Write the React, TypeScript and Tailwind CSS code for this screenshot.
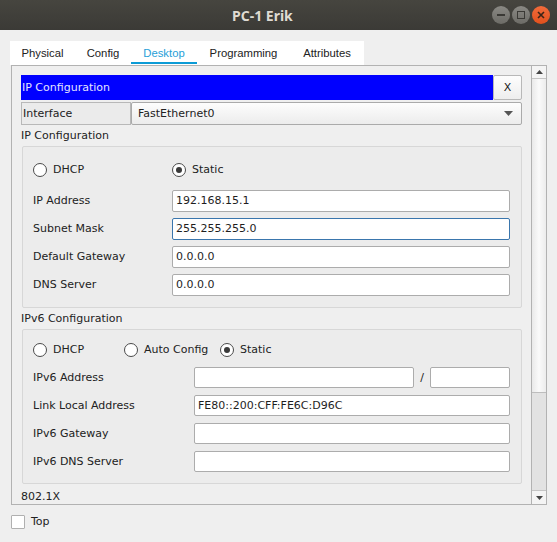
import React from "react";

function Radio({ checked }: { checked?: boolean }) {
  return (
    <span className="w-[14px] h-[14px] rounded-full border border-[#4a4a4a] bg-white flex items-center justify-center shrink-0">
      {checked && <span className="w-[6px] h-[6px] rounded-full bg-[#3a3a3a]" />}
    </span>
  );
}

function Input({
  value,
  focused,
  small,
  className = "",
}: {
  value?: string;
  focused?: boolean;
  small?: boolean;
  className?: string;
}) {
  return (
    <div
      className={`${small ? "h-[21px]" : "h-[22px]"} bg-white rounded-[2px] border flex items-center pl-[3px] pt-[1px] text-[#1e1e1e] ${
        focused ? "border-[#3a76ad]" : "border-[#acacac]"
      } ${className}`}
    >
      {value}
    </div>
  );
}

function Row({ label, labelW, children }: { label: string; labelW: string; children: React.ReactNode }) {
  return (
    <div className="flex items-center">
      <div className={`${labelW} shrink-0 pt-[1px]`}>{label}</div>
      {children}
    </div>
  );
}

export default function App() {
  return (
    <div className="w-[557px] h-[542px] bg-[#efefef] flex flex-col overflow-hidden font-['DejaVu_Sans',sans-serif] text-[11px] text-[#222]">
      {/* Title bar */}
      <div className="h-[30px] shrink-0 bg-gradient-to-b from-[#46453f] to-[#3b3a36] flex items-center">
        <div className="ml-[232px] font-['Noto_Sans',sans-serif] font-bold text-[14px] text-[#dfdbd2]">PC-1 Erik</div>
        <div className="flex-1" />
        <div className="flex items-center pr-[7px] gap-[2px]">
          <span className="w-[18px] h-[18px] rounded-full bg-gradient-to-b from-[#8a8984] to-[#6c6b66] flex items-center justify-center">
            <span className="w-[8px] h-[2px] bg-[#3a3935]" />
          </span>
          <span className="w-[18px] h-[18px] rounded-full bg-gradient-to-b from-[#8a8984] to-[#6c6b66] flex items-center justify-center">
            <span className="w-[8px] h-[8px] border-[1.5px] border-[#3a3935]" />
          </span>
          <span className="w-[18px] h-[18px] rounded-full bg-gradient-to-b from-[#f16b3a] to-[#e1501c] flex items-center justify-center">
            <svg width="8" height="8" viewBox="0 0 8 8">
              <path d="M1 1 L7 7 M7 1 L1 7" stroke="#3a2418" strokeWidth="1.6" />
            </svg>
          </span>
        </div>
      </div>

      {/* Tabs */}
      <div className="mt-[11px] ml-[10px] flex h-[24px] w-[354px] bg-white font-['Liberation_Sans',sans-serif] text-[11.3px] text-[#222]">
        <div className="w-[65px] flex items-center justify-center pt-[1px]">Physical</div>
        <div className="w-[56px] flex items-center justify-center pt-[1px]">Config</div>
        <div className="w-[66px] flex flex-col">
          <div className="flex-1 flex items-center justify-center text-[#27a0d8] pt-[4px]">Desktop</div>
          <div className="h-[3px] mb-[1px] bg-[#0b9bd6]" />
        </div>
        <div className="w-[93px] flex items-center justify-center pt-[1px]">Programming</div>
        <div className="w-[74px] flex items-center justify-center pt-[1px]">Attributes</div>
      </div>

      {/* Panel */}
      <div className="ml-[11px] w-[536px] h-[440px] border border-[#b2b2b2] flex shrink-0">
        <div className="flex-1 overflow-hidden pl-[9px] pr-[9px] pt-[9px] flex flex-col">
          {/* blue header */}
          <div className="flex h-[25px] shrink-0">
            <div className="flex-1 bg-[#0000ff] text-[#e4e4ff] flex items-center pl-[1px] pt-[2px]">IP Configuration</div>
            <div className="w-[29px] bg-gradient-to-b from-[#fdfdfd] to-[#eeeeee] border border-[#b8b8b8] rounded-[2px] flex items-center justify-center pt-[1px] text-[#222]">
              X
            </div>
          </div>
          {/* Interface */}
          <div className="flex h-[23px] mt-[2px] shrink-0">
            <div className="w-[110px] bg-[#ebebeb] border border-[#b8b8b8] flex items-center pl-[1px] pt-[2px]">Interface</div>
            <div className="flex-1 bg-gradient-to-b from-[#fdfdfd] to-[#ececec] border border-[#aaaaaa] rounded-[2px] flex items-center pl-[6px] pr-[8px]">
              <span className="flex-1 pt-[2px]">FastEthernet0</span>
              <svg width="9" height="5" viewBox="0 0 9 5">
                <path d="M0 0 L9 0 L4.5 5 Z" fill="#555" />
              </svg>
            </div>
          </div>

          <div className="h-[21px] shrink-0 flex items-center pt-[2px]">IP Configuration</div>
          <div className="h-[162px] shrink-0 ml-[1px] border border-[#d7d7d7] rounded-[2px] bg-[#ececec] pl-[10px] pr-[11px] pt-[12px]">
            <div className="flex items-center h-[22px]">
              <div className="w-[139px] flex items-center gap-[6px]">
                <Radio />
                <span className="pt-[1px]">DHCP</span>
              </div>
              <div className="flex items-center gap-[6px]">
                <Radio checked />
                <span className="pt-[1px]">Static</span>
              </div>
            </div>
            <div className="mt-[9px] flex flex-col gap-[6px]">
              <Row label="IP Address" labelW="w-[139px]">
                <Input value="192.168.15.1" className="flex-1" />
              </Row>
              <Row label="Subnet Mask" labelW="w-[139px]">
                <Input value="255.255.255.0" focused className="flex-1" />
              </Row>
              <Row label="Default Gateway" labelW="w-[139px]">
                <Input value="0.0.0.0" className="flex-1" />
              </Row>
              <Row label="DNS Server" labelW="w-[139px]">
                <Input value="0.0.0.0" className="flex-1" />
              </Row>
            </div>
          </div>

          <div className="h-[21px] shrink-0 flex items-center pt-[2px]">IPv6 Configuration</div>
          <div className="h-[155px] shrink-0 ml-[1px] border border-[#d7d7d7] rounded-[2px] bg-[#ececec] pl-[10px] pr-[11px] pt-[9px]">
            <div className="flex items-center h-[22px]">
              <div className="w-[91px] flex items-center gap-[6px]">
                <Radio />
                <span className="pt-[1px]">DHCP</span>
              </div>
              <div className="w-[96px] flex items-center gap-[6px]">
                <Radio />
                <span className="pt-[1px]">Auto Config</span>
              </div>
              <div className="flex items-center gap-[6px]">
                <Radio checked />
                <span className="pt-[1px]">Static</span>
              </div>
            </div>
            <div className="mt-[6px] flex flex-col gap-[7px]">
              <Row label="IPv6 Address" labelW="w-[161px]">
                <Input small className="w-[220px]" />
                <span className="w-[16px] text-center pt-[1px]">/</span>
                <Input small className="flex-1" />
              </Row>
              <Row label="Link Local Address" labelW="w-[161px]">
                <Input small value="FE80::200:CFF:FE6C:D96C" className="flex-1" />
              </Row>
              <Row label="IPv6 Gateway" labelW="w-[161px]">
                <Input small className="flex-1" />
              </Row>
              <Row label="IPv6 DNS Server" labelW="w-[161px]">
                <Input small className="flex-1" />
              </Row>
            </div>
          </div>
          <div className="h-[21px] shrink-0 mt-[2px] flex items-center pt-[2px]">802.1X</div>
        </div>

        {/* Scrollbar */}
        <div className="w-[15px] shrink-0 border-l border-[#b2b2b2] flex flex-col">
          <div className="h-[13px] shrink-0 border-b border-[#c4c4c4] bg-[#f4f4f4] flex items-center justify-center">
            <svg width="7" height="4" viewBox="0 0 7 4">
              <path d="M0 4 L7 4 L3.5 0 Z" fill="#444" />
            </svg>
          </div>
          <div className="h-[314px] shrink-0 border-b border-[#bdbdbd] bg-gradient-to-r from-[#e9e9e9] via-[#fafafa] to-[#ececec]" />
          <div className="flex-1 bg-[#e2e2e2]" />
          <div className="h-[14px] shrink-0 border-t border-[#c4c4c4] bg-[#f4f4f4] flex items-center justify-center">
            <svg width="7" height="4" viewBox="0 0 7 4">
              <path d="M0 0 L7 0 L3.5 4 Z" fill="#444" />
            </svg>
          </div>
        </div>
      </div>

      {/* Top checkbox */}
      <div className="mt-[9px] ml-[11px] flex items-center gap-[6px]">
        <span className="w-[14px] h-[14px] bg-white border border-[#b0b0b0] rounded-[1px]" />
        <span className="text-[11px]">Top</span>
      </div>
    </div>
  );
}
